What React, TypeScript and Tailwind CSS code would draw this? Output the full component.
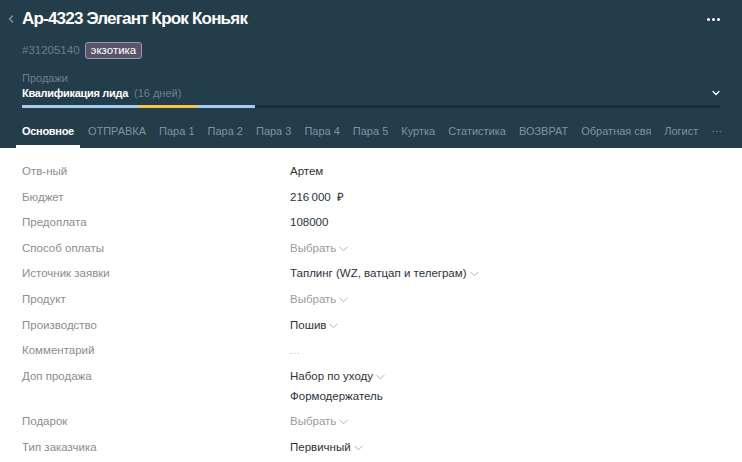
import { ChevronDown, ChevronLeft } from "lucide-react";

type Row = {
  label: string;
  value?: string;
  muted?: boolean;
  dropdown?: boolean;
  extra?: string;
  empty?: boolean;
};

const rows: Row[] = [
  { label: "Отв-ный", value: "Артем" },
  { label: "Бюджет", value: "216\u2009000\u00a0\u00a0₽" },
  { label: "Предоплата", value: "108000" },
  { label: "Способ оплаты", value: "Выбрать", muted: true, dropdown: true },
  { label: "Источник заявки", value: "Таплинг (WZ, ватцап и телеграм)", dropdown: true },
  { label: "Продукт", value: "Выбрать", muted: true, dropdown: true },
  { label: "Производство", value: "Пошив", dropdown: true },
  { label: "Комментарий", empty: true },
  { label: "Доп продажа", value: "Набор по уходу", dropdown: true, extra: "Формодержатель" },
  { label: "Подарок", value: "Выбрать", muted: true, dropdown: true },
  { label: "Тип заказчика", value: "Первичный", dropdown: true },
];

const tabs = [
  "ОТПРАВКА",
  "Пара 1",
  "Пара 2",
  "Пара 3",
  "Пара 4",
  "Пара 5",
  "Куртка",
  "Статистика",
  "ВОЗВРАТ",
];

function Chevron() {
  return (
    <svg width="9" height="6" viewBox="0 0 9 6" className="ml-[3px] mt-[2px]">
      <path d="M0.5 0.8 L4.5 4.8 L8.5 0.8" fill="none" stroke="#b3b3b3" strokeWidth="1" />
    </svg>
  );
}

export default function App() {
  return (
    <div className="h-[462px] w-[742px] overflow-hidden bg-white font-['Liberation_Sans',sans-serif]">
      <div className="bg-[#243d4b] pt-[8px]">
        <div className="flex items-center justify-between pl-[5px] pr-[22px]">
          <div className="flex items-center">
            <ChevronLeft size={12} strokeWidth={2.5} className="text-[#8a9aa6]" />
            <h1 className="ml-[5px] text-[17px] font-bold leading-[22px] tracking-[-0.8px] text-white">
              Ар-4323 Элегант Крок Коньяк
            </h1>
          </div>
          <div className="flex gap-[2px]">
            <span className="h-[3px] w-[3px] rounded-full bg-white" />
            <span className="h-[3px] w-[3px] rounded-full bg-white" />
            <span className="h-[3px] w-[3px] rounded-full bg-white" />
          </div>
        </div>

        <div className="mt-[12px] flex items-center pl-[22px]">
          <span className="text-[11.5px] text-[#6c7f8c]">#31205140</span>
          <span className="ml-[5px] rounded-[3px] border border-[#a88fb5] bg-[#575668] px-[5px] text-[11.5px] leading-[15px] text-white">
            экзотика
          </span>
        </div>

        <div className="mt-[13px] pl-[22px] pr-[22px]">
          <div className="text-[11px] leading-[13px] text-[#6c7f8c]">Продажи</div>
          <div className="flex items-center justify-between">
            <div className="text-[11px] leading-[16px]">
              <span className="font-bold tracking-[-0.3px] text-white">Квалификация лида</span>
              <span className="ml-[6px] text-[#6c7f8c]">(16 дней)</span>
            </div>
            <ChevronDown size={12} strokeWidth={2.5} className="mr-[-2px] text-white" />
          </div>
          <div className="mt-[4px] flex h-[3px] bg-[#1a2d39]">
            <div className="w-[116px] bg-[#a6cdf0]" />
            <div className="w-[59px] bg-[#f2c94c]" />
            <div className="w-[58px] bg-[#a6cdf0]" />
          </div>
        </div>

        <div className="mt-[15px] flex items-start whitespace-nowrap pl-[16px] text-[11px] leading-[16px]">
          <div className="flex flex-col items-center">
            <span className="px-[6px] font-bold tracking-[-0.3px] text-white">Основное</span>
            <span className="mt-[6px] h-[3px] w-full bg-white" />
          </div>
          <div className="ml-[8px] flex gap-[13px] text-[#7f93a1]">
            {tabs.map((t) => (
              <span key={t}>{t}</span>
            ))}
            <span className="w-[70px] overflow-hidden">Обратная свя</span>
            <span>Логист</span>
            <span>···</span>
          </div>
        </div>
      </div>

      <div className="pl-[22px] pt-[10px] text-[11.5px] leading-[16px]">
        {rows.map((r) => (
          <div key={r.label} className="flex py-[4.8px]">
            <div className="w-[268px] text-[#8c8c8c]">{r.label}</div>
            <div className="flex flex-col">
              {r.empty ? (
                <span className="text-[#c4c4c4]">...</span>
              ) : (
                <span className={"flex items-center " + (r.muted ? "text-[#9b9b9b]" : "text-[#2b3339]")}>
                  {r.value}
                  {r.dropdown && <Chevron />}
                </span>
              )}
              {r.extra && <span className="mt-[4px] text-[#2b3339]">{r.extra}</span>}
            </div>
          </div>
        ))}
      </div>
    </div>
  );
}
